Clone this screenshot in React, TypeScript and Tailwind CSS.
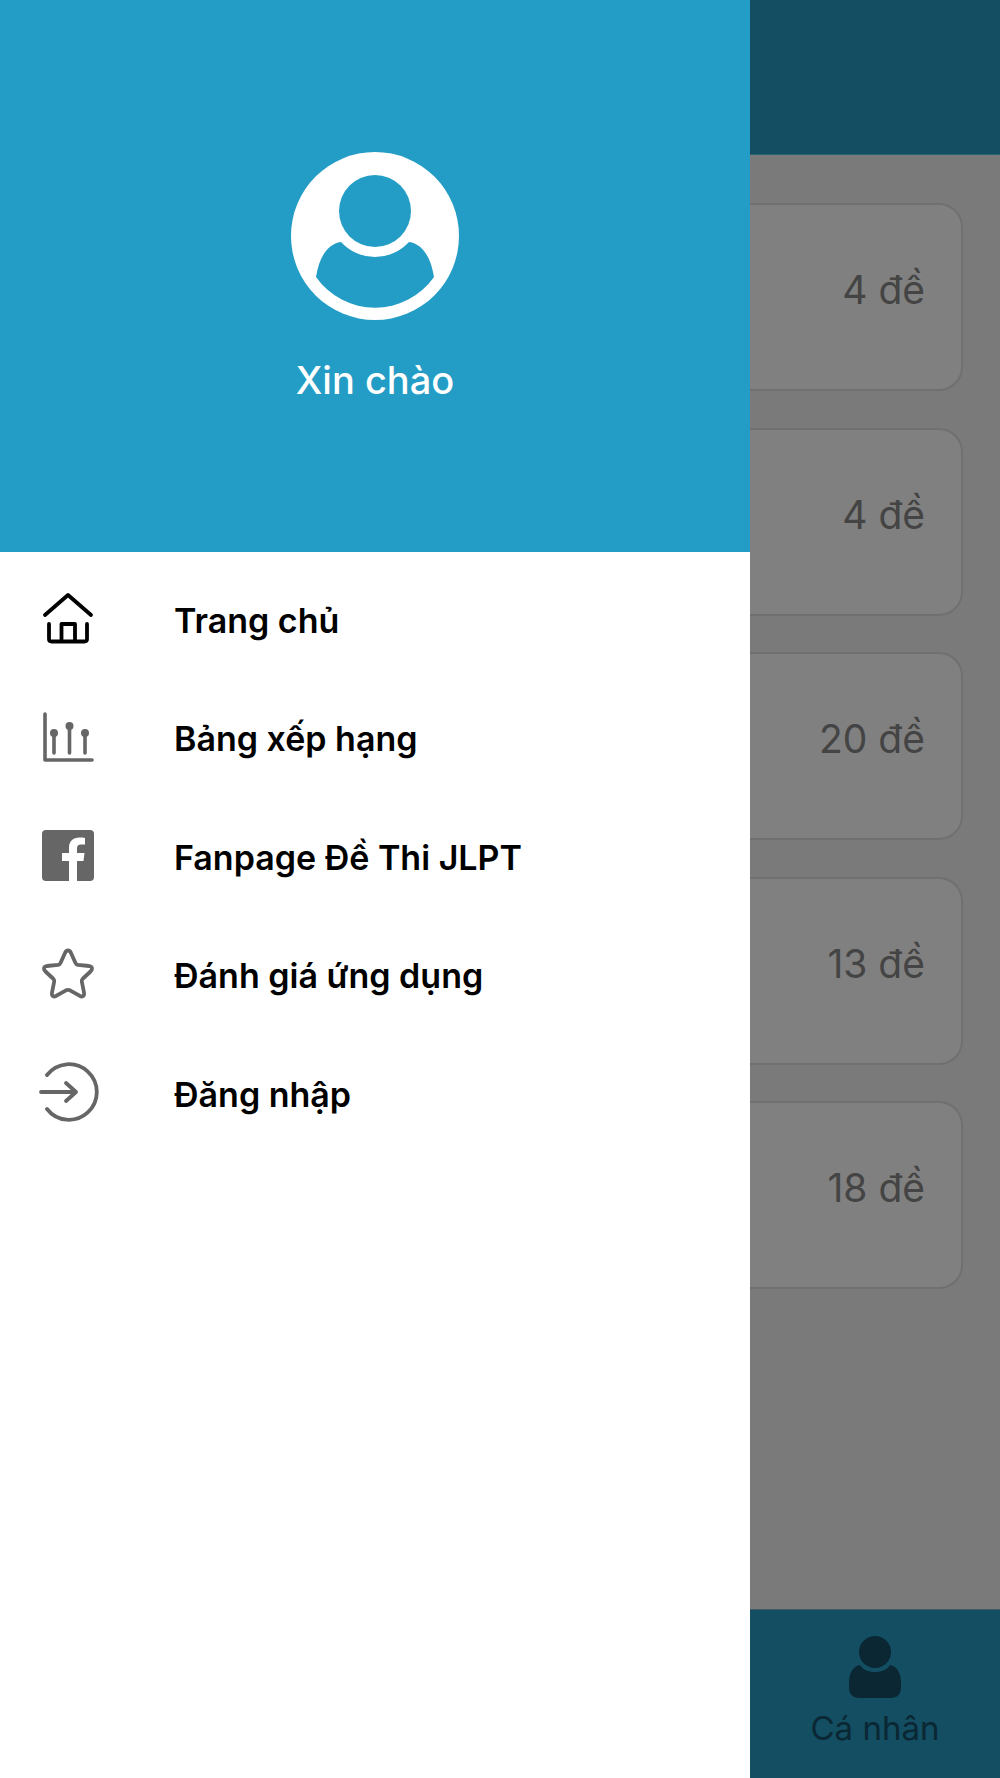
const items = [
  { label: 'Trang chủ', icon: <HomeIcon /> },
  { label: 'Bảng xếp hạng', icon: <ChartIcon /> },
  { label: 'Fanpage Đề Thi JLPT', icon: <FacebookIcon /> },
  { label: 'Đánh giá ứng dụng', icon: <StarIcon /> },
  { label: 'Đăng nhập', icon: <LoginIcon /> },
];

const counts = ['4 đề', '4 đề', '20 đề', '13 đề', '18 đề'];

function HomeIcon() {
  return (
    <svg width="52" height="52" viewBox="0 0 52 52" fill="none" stroke="#000" strokeWidth="3.8" strokeLinecap="round" strokeLinejoin="round">
      <path d="M3 23 L26 3 L49 23" />
      <path d="M7 32 V47 Q7 49.500 9.500 49.500 H42.500 Q45 49.500 45 47 V32" />
      <path d="M19.500 49 V32 H33 V49" />
    </svg>
  );
}

function ChartIcon() {
  return (
    <svg width="52" height="52" viewBox="0 0 52 52" fill="none" stroke="#666" strokeWidth="3.6" strokeLinecap="round" strokeLinejoin="round">
      <path d="M3 3 V49 H50" />
      <path d="M12 23 V42 M27.500 16 V42 M43 23 V42" />
      <circle cx="12" cy="22" r="4" fill="#666" stroke="none" />
      <circle cx="27.500" cy="15" r="4" fill="#666" stroke="none" />
      <circle cx="43" cy="22" r="4" fill="#666" stroke="none" />
    </svg>
  );
}

function FacebookIcon() {
  return (
    <svg width="52" height="52" viewBox="0 0 52 52">
      <path
        fill="#666"
        d="M4 1 H48 A4 4 0 0 1 52 5 V48 A4 4 0 0 1 48 52 H35 V32 H41.500 L42.500 24 H35 V19.500 C35 17 36 15.500 39 15.500 H43 V9 C41.500 8.800 40 8.600 37.500 8.600 C31 8.600 27 12.500 27 19 V24 H20 V32 H27 V52 H4 A4 4 0 0 1 0 48 V5 A4 4 0 0 1 4 1 Z"
      />
    </svg>
  );
}

function StarIcon() {
  return (
    <svg width="52" height="52" viewBox="0 0 52 52" fill="none" stroke="#666" strokeWidth="3.8" strokeLinejoin="round">
      <path d="M26 2.500 Q28 2.500 29 5 L33.500 15 Q34 16.500 36 16.800 L47 18 Q50 18.500 50 20.500 Q50 22 48.500 23.500 L40.500 31 Q39.500 32 39.800 33.500 L42 44.500 Q42.500 48.500 40 48.500 Q39 48.500 37.500 47.700 L28 42.300 Q26 41.300 24 42.300 L14.500 47.700 Q13 48.500 12 48.500 Q9.500 48.500 10 44.500 L12.200 33.500 Q12.500 32 11.500 31 L3.500 23.500 Q2 22 2 20.500 Q2 18.500 5 18 L16 16.800 Q18 16.500 18.500 15 L23 5 Q24 2.500 26 2.500 Z" />
    </svg>
  );
}

function LoginIcon() {
  return (
    <svg className="-ml-[3px]" width="60" height="60" viewBox="0 0 60 60" fill="none" stroke="#666" strokeWidth="3.8" strokeLinecap="round" strokeLinejoin="round">
      <path d="M8 13 A27.800 27.800 0 1 1 8 47" />
      <path d="M2 30 H37 M27 21 L37 30 L27 39" />
    </svg>
  );
}

function AvatarIcon() {
  return (
    <svg width="168" height="168" viewBox="0 0 168 168">
      <circle cx="84" cy="84" r="84" fill="#fff" />
      <circle cx="84" cy="59" r="36" fill="#239dc5" />
      <path
        fill="#239dc5"
        d="M50 90 A46 46 0 0 0 118 90 C132 92 140 106 143 125 A72 72 0 0 1 25 125 C28 106 36 92 50 90 Z"
      />
    </svg>
  );
}

export default function App() {
  return (
    <div className="flex w-[1000px] h-[1778px] overflow-hidden font-['Inter',sans-serif]">
      <aside className="w-[750px] flex flex-col bg-white">
        <div className="h-[552px] bg-[#239dc5] flex flex-col items-center pt-[152px]">
          <AvatarIcon />
          <div className="mt-[38px] text-[38px] leading-[44px] font-medium text-white">Xin chào</div>
        </div>
        <nav className="flex flex-col pt-[10px]">
          {items.map((item) => (
            <div key={item.label} className="h-[118.500px] flex items-center">
              <div className="w-[174px] pl-[42px] pb-[6px] flex items-center">
                {item.icon}
              </div>
              <span className="pb-[2px] text-[34px] font-semibold text-black">{item.label}</span>
            </div>
          ))}
        </nav>
      </aside>
      <div className="flex-1 flex flex-col bg-[#7a7a7a]">
        <div className="h-[155px] bg-[#134e62] border-b border-[#2a6275]" />
        <div className="flex-1 flex flex-col gap-[36.500px] pt-[48px] pr-[37px]">
          {counts.map((count, i) => (
            <div
              key={i}
              className="h-[188px] bg-[#808080] border-2 border-l-0 border-[#707070] rounded-r-[24px] flex items-center justify-end pr-[36px] pb-[13px] text-[39px] text-[#444444]"
            >
              {count}
            </div>
          ))}
        </div>
        <div className="h-[169px] bg-[#134e62] border-t border-[#46585f] flex flex-col items-center pt-[26px]">
          <svg width="54" height="62" viewBox="0 0 54 62" fill="#0a2733">
            <circle cx="27" cy="16" r="16" />
            <path d="M12 29 C16 35 22 36 27 36 C32 36 38 35 42 29 C49 30 53 37 53 47 V51 Q53 62 42 62 H12 Q1 62 1 51 V47 C1 37 5 30 12 29 Z" />
          </svg>
          <div className="mt-[8px] text-[33px] leading-[44px] text-[#0a2733]">Cá nhân</div>
        </div>
      </div>
    </div>
  );
}
